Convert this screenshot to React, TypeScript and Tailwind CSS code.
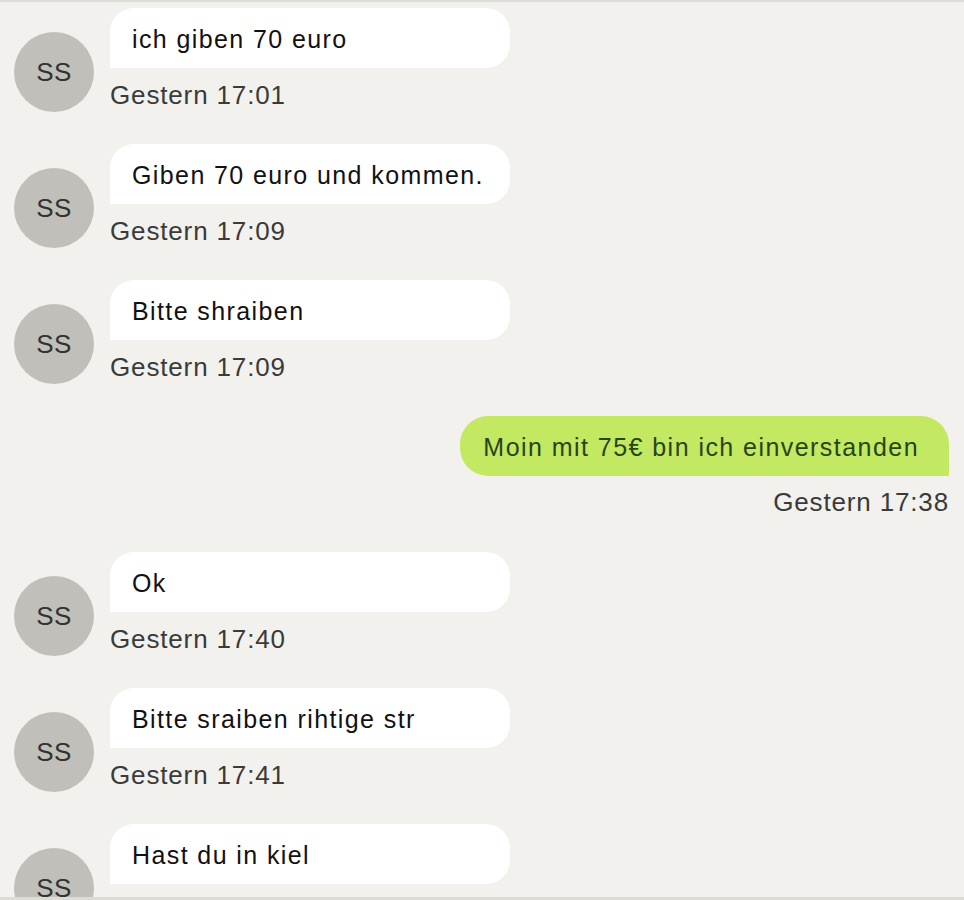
type Msg = {
  id: number;
  text: string;
  time: string;
  mine?: boolean;
};

const messages: Msg[] = [
  { id: 1, text: "ich giben 70 euro", time: "Gestern 17:01" },
  { id: 2, text: "Giben 70 euro und kommen.", time: "Gestern 17:09" },
  { id: 3, text: "Bitte shraiben", time: "Gestern 17:09" },
  { id: 4, text: "Moin mit 75€ bin ich einverstanden", time: "Gestern 17:38", mine: true },
  { id: 5, text: "Ok", time: "Gestern 17:40" },
  { id: 6, text: "Bitte sraiben rihtige str", time: "Gestern 17:41" },
  { id: 7, text: "Hast du in kiel", time: "Gestern 17:41" },
];

function Incoming({ msg }: { msg: Msg }) {
  return (
    <div className="flex items-end pl-[14px] mb-[32px]">
      <div className="w-[80px] h-[80px] shrink-0 rounded-full bg-[#c0bfba] flex items-center justify-center text-[26px] tracking-[0.5px] text-[#333331]">
        SS
      </div>
      <div className="ml-[16px] flex flex-col">
        <div className="w-[400px] h-[60px] bg-white rounded-t-[24px] rounded-br-[24px] flex items-center pl-[22px] pt-[3px] text-[25px] tracking-[1.4px] text-[#111]">
          {msg.text}
        </div>
        <div className="mt-[10px] h-[34px] leading-[34px] text-[26px] tracking-[0.85px] text-[#3a3a38]">
          {msg.time}
        </div>
      </div>
    </div>
  );
}

function Outgoing({ msg }: { msg: Msg }) {
  return (
    <div className="flex flex-col items-end pr-[15px] mb-[33px]">
      <div className="h-[60px] bg-[#c3e862] rounded-t-[28px] rounded-bl-[28px] flex items-center pl-[23px] pr-[30px] pt-[3px] text-[25px] tracking-[1.45px] text-[#274516]">
        {msg.text}
      </div>
      <div className="mt-[9px] h-[34px] leading-[34px] text-[26px] tracking-[0.85px] text-[#3a3a38]">
        {msg.time}
      </div>
    </div>
  );
}

export default function App() {
  return (
    <div
      className="w-[964px] h-[900px] overflow-hidden bg-[#f2f1ed] border-t-2 border-b-[3px] border-[#dcdbd6]"
      style={{ fontFamily: '"Liberation Sans", Arial, sans-serif' }}
    >
      <div className="pt-[6px]">
        {messages.map((m) =>
          m.mine ? <Outgoing key={m.id} msg={m} /> : <Incoming key={m.id} msg={m} />
        )}
      </div>
    </div>
  );
}
